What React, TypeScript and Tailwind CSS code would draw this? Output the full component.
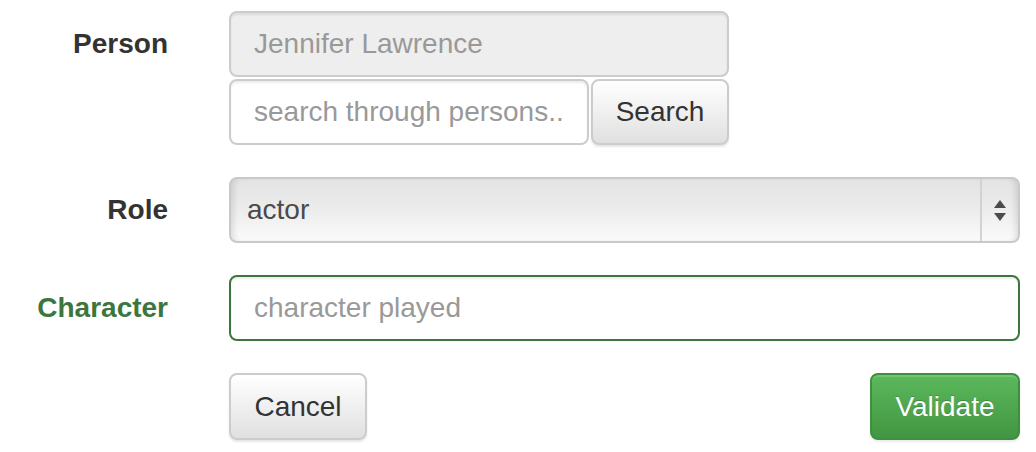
import React from 'react';

const FormRow: React.FC<{ label: string; labelClass?: string; children: React.ReactNode }> = ({ label, labelClass = 'text-[#333]', children }) => (
  <div className="flex items-start">
    <label className={`w-[168px] shrink-0 h-[66px] flex items-center justify-end font-bold ${labelClass}`}>{label}</label>
    <div className="ml-[61px] w-[791px] flex flex-col gap-[2px]">{children}</div>
  </div>
);

const App: React.FC = () => {
  return (
    <div className="w-[1036px] h-[452px] bg-white pt-[11px] flex flex-col gap-[32px] text-[28px] leading-none text-[#333] font-['Liberation_Sans',Arial,sans-serif] overflow-hidden">
      <FormRow label="Person">
        {/* selected person, read only */}
        <input
          readOnly
          value="Jennifer Lawrence"
          className="w-[500px] h-[66px] rounded-[8px] border-2 border-[#ccc] bg-[#eee] px-[23px] text-[#999] outline-none shadow-[inset_0_2px_2px_rgba(0,0,0,0.075)]"
        />
        <div className="flex gap-[2px]">
          <input
            placeholder="search through persons.."
            className="w-[360px] h-[66px] rounded-[8px] border-2 border-[#ccc] bg-white px-[23px] placeholder:text-[#999] outline-none shadow-[inset_0_2px_2px_rgba(0,0,0,0.075)]"
          />
          <button className="w-[138px] h-[66px] rounded-[8px] border-2 border-[#ccc] bg-gradient-to-b from-white to-[#e0e0e0] text-[#333] shadow-[0_2px_2px_rgba(0,0,0,0.1)]">
            Search
          </button>
        </div>
      </FormRow>

      <FormRow label="Role">
        {/* mac style native select */}
        <div className="relative w-[791px] h-[66px] rounded-[8px] border-2 border-[#c9c9c9] bg-gradient-to-b from-[#e3e3e3] via-[#ececec] to-[#fbfbfb] shadow-[inset_6px_0_6px_-4px_rgba(0,0,0,0.12),inset_-6px_0_6px_-4px_rgba(0,0,0,0.12)] flex items-center">
          <span className="pl-[16px] text-[#4a4a4a] flex-1">actor</span>
          <div className="w-[38px] h-full border-l-2 border-[#d2d2d2] flex flex-col items-center justify-center gap-[5px]">
            <svg width="12" height="8" viewBox="0 0 12 8"><path d="M6 0 L12 8 L0 8 Z" fill="#4a4a4a" /></svg>
            <svg width="12" height="8" viewBox="0 0 12 8"><path d="M0 0 L12 0 L6 8 Z" fill="#4a4a4a" /></svg>
          </div>
        </div>
      </FormRow>

      <FormRow label="Character" labelClass="text-[#3c763d]">
        <input
          placeholder="character played"
          className="w-[791px] h-[66px] rounded-[8px] border-2 border-[#3c763d] bg-white px-[23px] placeholder:text-[#999] outline-none shadow-[inset_0_2px_2px_rgba(0,0,0,0.075)]"
        />
      </FormRow>

      <div className="flex">
        <div className="w-[229px] shrink-0" />
        <div className="w-[791px] flex justify-between">
          <button className="w-[138px] h-[67px] rounded-[8px] border-2 border-[#ccc] bg-gradient-to-b from-white to-[#e0e0e0] text-[#333] shadow-[0_2px_2px_rgba(0,0,0,0.1)]">
            Cancel
          </button>
          <button className="w-[150px] h-[67px] rounded-[8px] border-2 border-[#3e8f3e] bg-gradient-to-b from-[#5cb85c] to-[#419641] text-white [text-shadow:0_-1px_0_rgba(0,0,0,0.2)] shadow-[inset_0_2px_0_rgba(255,255,255,0.15),0_2px_2px_rgba(0,0,0,0.075)]">
            Validate
          </button>
        </div>
      </div>
    </div>
  );
};

export default App;
